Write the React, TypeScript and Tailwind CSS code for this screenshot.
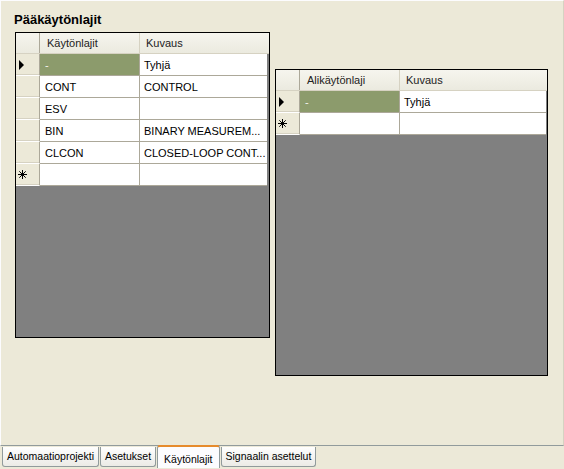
import React from "react";

type Row = { key: string; desc: string; current?: boolean; isNew?: boolean };

const mainRows: Row[] = [
  { key: "-", desc: "Tyhjä", current: true },
  { key: "CONT", desc: "CONTROL" },
  { key: "ESV", desc: "" },
  { key: "BIN", desc: "BINARY MEASUREM..." },
  { key: "CLCON", desc: "CLOSED-LOOP CONT..." },
  { key: "", desc: "", isNew: true },
];

const subRows: Row[] = [
  { key: "-", desc: "Tyhjä", current: true },
  { key: "", desc: "", isNew: true },
];

function RowMarker({ row }: { row: Row }) {
  if (row.current) {
    return (
      <svg width="6" height="10" viewBox="0 0 6 10" className="ml-[3px]">
        <polygon points="0,0 5,5 0,10" fill="#000" />
      </svg>
    );
  }
  if (row.isNew) {
    return (
      <svg width="9" height="9" viewBox="0 0 9 9" className="ml-[2px]">
        <path d="M4.5 0V9M0 4.5H9M1.3 1.3L7.7 7.7M7.7 1.3L1.3 7.7" stroke="#000" strokeWidth="1" />
      </svg>
    );
  }
  return null;
}

function Grid({
  width,
  height,
  firstHeader,
  secondWidth,
  rows,
}: {
  width: number;
  height: number;
  firstHeader: string;
  secondWidth: string;
  rows: Row[];
}) {
  return (
    <div
      className="border border-black bg-[#808080] flex flex-col"
      style={{ width, height }}
    >
      <div className="flex h-[21px] bg-gradient-to-b from-[#F6F5EE] to-[#EBEADF] border-b border-[#D6D2C2] text-[#222]">
        <div className="w-[24px] border-r border-[#ACA899]" />
        <div className="w-[100px] flex items-center pl-[7px] border-r border-[#D6D2C2]">
          {firstHeader}
        </div>
        <div className={`${secondWidth} flex items-center pl-[6px]`}>Kuvaus</div>
      </div>
      {rows.map((row, i) => (
        <div key={i} className="flex h-[22px]">
          <div className="w-[24px] bg-[#ECE9D8] flex items-center border-r border-[#ACA899] border-b border-b-[#FFFFFF] shadow-[inset_0_-1px_0_#D6D2C2]">
            <RowMarker row={row} />
          </div>
          <div
            className={`w-[100px] flex items-center pl-[5px] pt-[1px] border-r border-b border-[#ACA899] ${
              row.current ? "bg-[#8C9B6C] text-[#F4F4EC]" : "bg-white"
            }`}
          >
            {row.key}
          </div>
          <div className={`${secondWidth} flex items-center pl-[4px] pt-[1px] bg-white border-b border-[#ACA899] whitespace-nowrap overflow-hidden`}>
            {row.desc}
          </div>
        </div>
      ))}
    </div>
  );
}

const tabs = ["Automaatioprojekti", "Asetukset", "Käytönlajit", "Signaalin asettelut"];

export default function App() {
  return (
    <div className="w-[564px] h-[469px] bg-[#ECE9D8] flex flex-col text-[11px] text-black font-['Liberation_Sans',Arial,sans-serif]">
      <div className="flex-1 flex flex-col border-l border-t border-[#FCFCFE] border-r border-r-[#D6D2C2] border-b border-b-[#919B9C]">
        <div className="pl-[13px] pt-[11px] h-[31px] text-[13px] leading-[16px] font-bold">Pääkäytönlajit</div>
        <div className="flex items-start">
          <div className="ml-[14px]">
            <Grid width={255} height={306} firstHeader="Käytönlajit" secondWidth="w-[127px]" rows={mainRows} />
          </div>
          <div className="ml-[5px] mt-[37px]">
            <Grid width={273} height={307} firstHeader="Alikäytönlaji" secondWidth="w-[146px]" rows={subRows} />
          </div>
        </div>
      </div>
      <div className="h-[23px] flex items-start pl-[2px] text-[10.5px]">
        {tabs.map((t) =>
          t === "Käytönlajit" ? (
            <div
              key={t}
              className="-mt-[1px] h-[23px] px-[6px] pt-[5px] mr-[1px] bg-[#FCFCFE] border-x border-[#919B9C] border-t-2 border-t-[#E68B2C] rounded-t-[3px] leading-[14px]"
            >
              {t}
            </div>
          ) : (
            <div
              key={t}
              className="mt-[1px] h-[20px] px-[4px] pt-[2px] mr-[1px] bg-gradient-to-b from-[#FEFEFE] to-[#ECEBE6] border border-t-0 border-[#919B9C] rounded-b-[3px] leading-[14px]"
            >
              {t}
            </div>
          )
        )}
      </div>
    </div>
  );
}
